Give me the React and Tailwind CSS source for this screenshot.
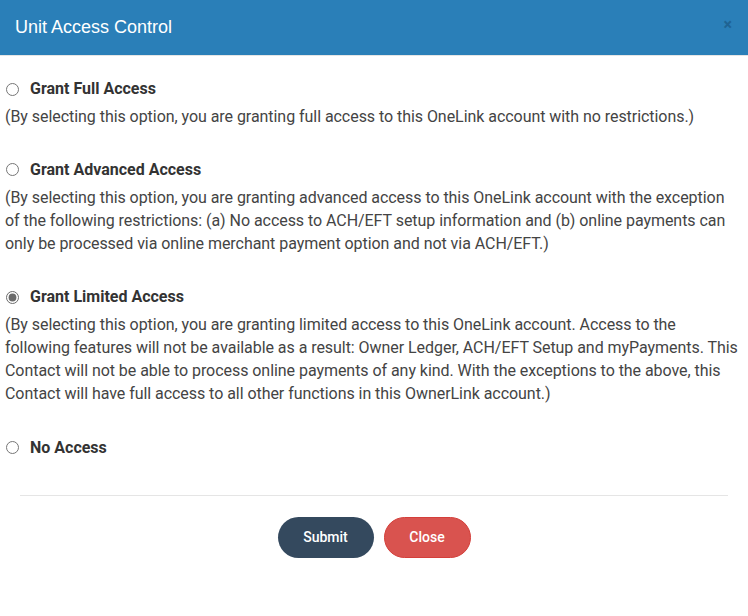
import React, { useState } from 'react'

const options = [
  {
    id: 'full',
    label: 'Grant Full Access',
    text: '(By selecting this option, you are granting full access to this OneLink account with no restrictions.)',
  },
  {
    id: 'advanced',
    label: 'Grant Advanced Access',
    text: '(By selecting this option, you are granting advanced access to this OneLink account with the exception of the following restrictions: (a) No access to ACH/EFT setup information and (b) online payments can only be processed via online merchant payment option and not via ACH/EFT.)',
  },
  {
    id: 'limited',
    label: 'Grant Limited Access',
    text: '(By selecting this option, you are granting limited access to this OneLink account. Access to the following features will not be available as a result: Owner Ledger, ACH/EFT Setup and myPayments. This Contact will not be able to process online payments of any kind. With the exceptions to the above, this Contact will have full access to all other functions in this OwnerLink account.)',
  },
  {
    id: 'none',
    label: 'No Access',
    text: '',
  },
]

const App = () => {
  const [access, setAccess] = useState('limited')

  return (
    <div className="h-[616px] w-[748px] bg-white font-['Roboto',sans-serif] text-[#444]">
      <div className="flex h-[56px] items-center justify-between border-b border-[#e5e5e5] bg-[#2a7fb8] pl-[15px] pr-[16px]">
        <h1 className="font-['Liberation_Sans',Arial,sans-serif] text-[18px] text-white">Unit Access Control</h1>
        <button className="mb-[6px] text-[16px] font-bold leading-none text-[#1d5d8a] opacity-80">×</button>
      </div>

      <div className="px-[5px] pt-[22px]">
        {options.map((opt) => (
          <div key={opt.id} className="mb-[31px] first:mb-[30px] last:mb-0">
            <label className="flex h-[22px] items-center text-[16px] font-bold text-[#333]">
              <input
                type="radio"
                name="access"
                checked={access === opt.id}
                onChange={() => setAccess(opt.id)}
                className="ml-[1px] mr-[11px] h-[13px] w-[13px] accent-[#6b6b6b]"
              />
              {opt.label}
            </label>
            {opt.text ? (
              <p className="mt-[6px] pr-[2px] text-[16px] leading-[1.42857] tracking-[-0.05px]">{opt.text}</p>
            ) : null}
          </div>
        ))}
      </div>

      <div className="mx-[20px] mt-[36px] border-t border-[#e5e5e5]" />

      <div className="flex justify-center gap-[10px] pt-[21px]">
        <button className="h-[41px] w-[96px] rounded-full bg-[#34495e] text-[14px] font-medium text-white">
          Submit
        </button>
        <button className="h-[41px] w-[87px] rounded-full border border-[#d43f3a] bg-[#d9534f] text-[14px] font-medium text-white">
          Close
        </button>
      </div>
    </div>
  )
}

export default App
